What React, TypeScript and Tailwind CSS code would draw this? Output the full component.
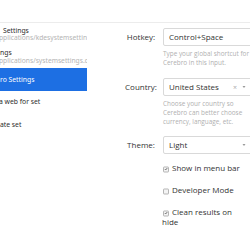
import React from "react";

interface ResultRow {
  title: string;
  subtitle?: string;
  titleOffset: string;
  selected?: boolean;
}

const rows: ResultRow[] = [
  {
    title: "Settings",
    subtitle: "pplications/kdesystemsettings.desktop",
    titleOffset: "pl-[3px]",
  },
  {
    title: "ngs",
    subtitle: "pplications/systemsettings.desktop",
    titleOffset: "pl-0",
  },
  { title: "ro Settings", titleOffset: "pl-0", selected: true },
  { title: "a web for set", titleOffset: "ml-[-1px]" },
  { title: "ate set", titleOffset: "pl-0" },
];

const CheckBox = ({ checked }: { checked: boolean }) => (
  <span className="mr-[3px] ml-[1px] inline-flex h-[6px] w-[6px] translate-y-[0.5px] items-center justify-center rounded-[1px] border border-[#b5b5b5] bg-[#f4f4f4] align-middle">
    {checked && (
      <svg viewBox="0 0 10 10" className="h-[5px] w-[5px]">
        <path
          d="M2 5.2 L4.2 7.4 L8.2 2.6"
          fill="none"
          stroke="#444"
          strokeWidth="1.8"
        />
      </svg>
    )}
  </span>
);

const Field = ({
  label,
  children,
}: {
  label: string;
  children: React.ReactNode;
}) => (
  <div className="flex items-center">
    <label className="w-[38px] shrink-0 text-center text-[8px] text-[#333]">
      {label}
    </label>
    <div className="ml-[3px] flex h-[18px] flex-1 items-center rounded-[2px] border border-[#d9d9d9] bg-white pl-[5px] pr-[5px] text-[8px] text-[#333]">
      {children}
    </div>
  </div>
);

const Caret = () => (
  <svg viewBox="0 0 6 4" className="ml-[5px] h-[2px] w-[4px]">
    <path d="M0 0 L6 0 L3 4 Z" fill="#999" />
  </svg>
);

export default function App() {
  return (
    <div
      className="relative h-[250px] w-[250px] overflow-hidden bg-white"
      style={{ fontFamily: '"Open Sans", "Noto Sans", sans-serif' }}
    >
      <div className="h-[23px] w-full border-b border-[#ececec]" />

      <div className="flex">
        <div className="w-[87px] shrink-0 overflow-hidden">
          {rows.map((row, i) => (
            <div
              key={i}
              className={`flex h-[22.5px] flex-col justify-center overflow-hidden whitespace-nowrap ${
                row.selected ? "bg-[#1d6fe3]" : "bg-white"
              }`}
            >
              <div
                className={`${row.titleOffset} text-[6.8px] leading-[7.5px] ${
                  row.selected ? "text-white" : "text-[#2b2b2b]"
                }`}
                style={{ fontFamily: '"Noto Sans", sans-serif' }}
              >
                {row.title}
              </div>
              {row.subtitle && (
                <div
                  className="ml-[-1px] text-[6.7px] leading-[7.5px] text-[#b4b4b4]"
                  style={{ fontFamily: '"Noto Sans", sans-serif' }}
                >
                  {row.subtitle}
                </div>
              )}
            </div>
          ))}
        </div>

        {/* settings preview */}
        <div className="w-[165px] shrink-0 pl-[35px] pt-[5px]">
          <Field label="Hotkey:">Control+Space</Field>
          <p className="ml-[41px] mt-[2.5px] text-[6.4px] leading-[9px] text-[#b0b0b0]">
            Type your global shortcut for
            <br />
            Cerebro in this input.
          </p>

          <div className="mt-[11.5px]">
            <Field label="Country:">
              <span className="flex-1">United States</span>
              <span className="text-[7px] leading-none text-[#aaa]">×</span>
              <Caret />
            </Field>
          </div>
          <p className="ml-[41px] mt-[2.5px] text-[6.4px] leading-[9px] text-[#b0b0b0]">
            Choose your country so
            <br />
            Cerebro can better choose
            <br />
            currency, language, etc.
          </p>

          <div className="mt-[10.5px]">
            <Field label="Theme:">
              <span className="flex-1">Light</span>
              <Caret />
            </Field>
          </div>

          <div className="ml-[40px] mt-[9px] flex flex-col gap-[12px] text-[8px] leading-[10px] text-[#333]">
            <div>
              <CheckBox checked />
              Show in menu bar
            </div>
            <div>
              <CheckBox checked={false} />
              Developer Mode
            </div>
            <div>
              <CheckBox checked />
              Clean results on
              <br />
              hide
            </div>
          </div>
        </div>
      </div>
    </div>
  );
}
